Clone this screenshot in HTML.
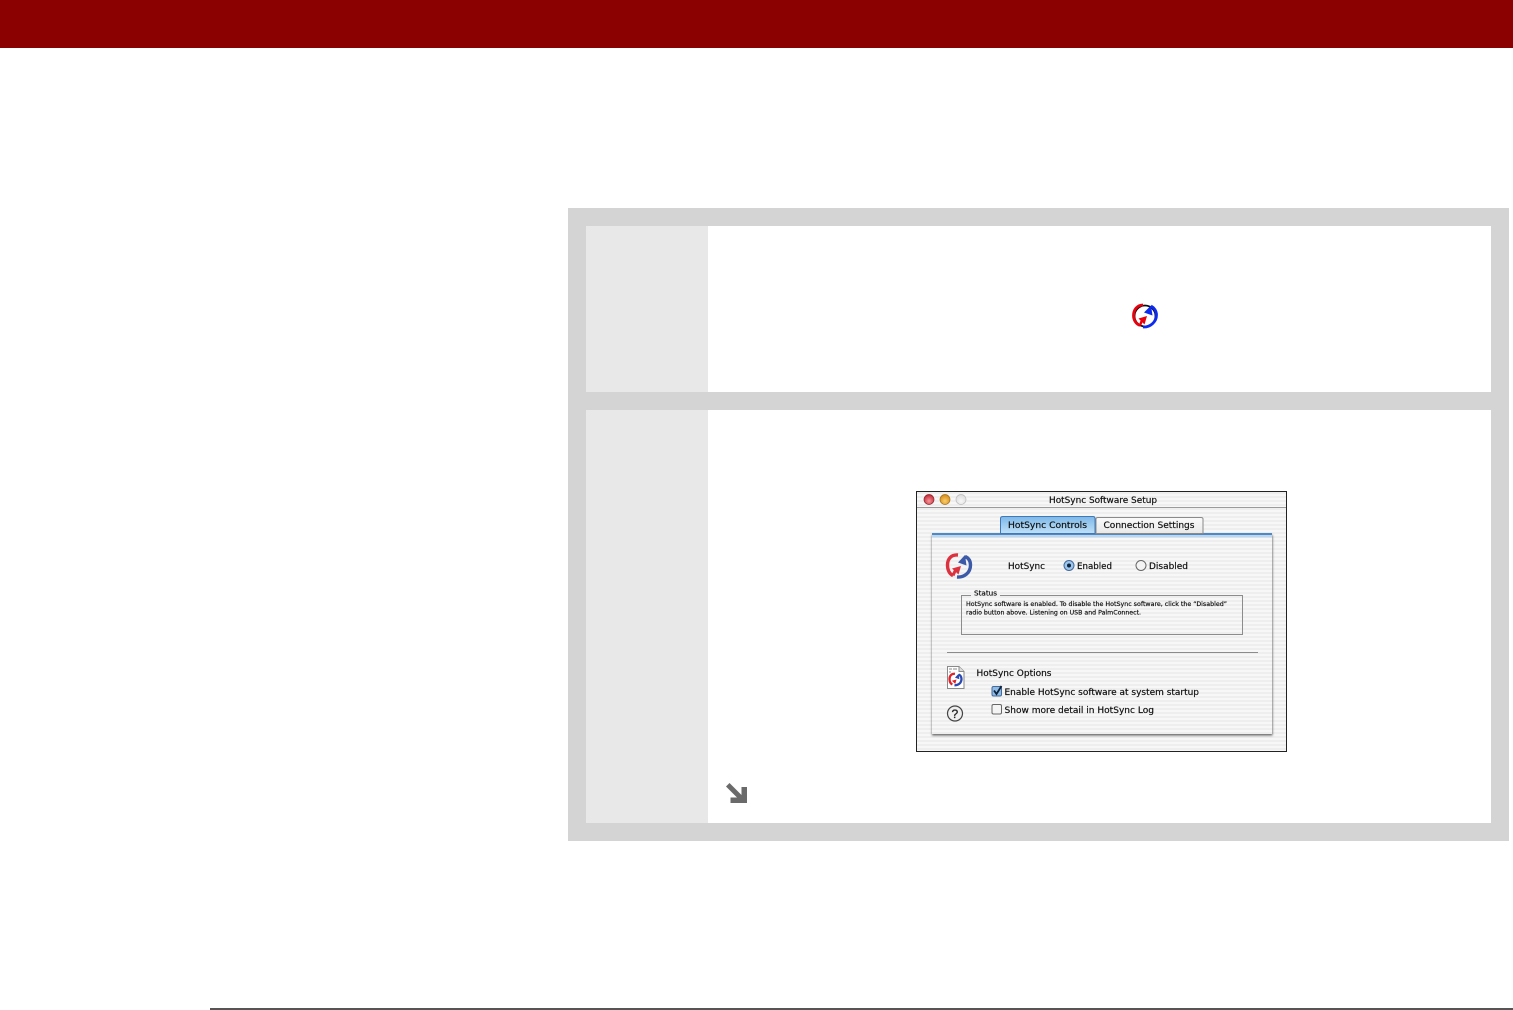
<!DOCTYPE html>
<html>
<head>
<meta charset="utf-8">
<style>
html,body{margin:0;padding:0;width:1513px;height:1010px;overflow:hidden;background:#fff}
.a{position:absolute}
svg text{font-family:"DejaVu Sans","Liberation Sans",sans-serif;fill:#111;stroke:#111;stroke-width:.2}
</style>
</head>
<body>
<div class="a" style="left:0;top:0;width:1513px;height:48px;background:#8b0000"></div>
<div class="a" style="left:568px;top:208px;width:941px;height:633px;background:#d4d4d4"></div>
<div class="a" style="left:586px;top:226px;width:122px;height:166px;background:#e8e8e8"></div>
<div class="a" style="left:708px;top:226px;width:783px;height:166px;background:#fff"></div>
<div class="a" style="left:586px;top:410px;width:122px;height:413px;background:#e8e8e8"></div>
<div class="a" style="left:708px;top:410px;width:783px;height:413px;background:#fff"></div>
<div class="a" style="left:210px;top:1008px;width:1303px;height:2px;background:#555"></div>

<svg class="a" style="left:0;top:0" width="1513" height="1010" viewBox="0 0 1513 1010">
<defs>
<pattern id="st" width="4" height="4" patternUnits="userSpaceOnUse">
<rect width="4" height="4" fill="#f7f7f7"/><rect y="0" width="4" height="2" fill="#eeeeee"/>
</pattern>
<linearGradient id="tab" x1="0" y1="0" x2="0" y2="1"><stop offset="0" stop-color="#7db9e8"/><stop offset="1" stop-color="#c0e0f8"/></linearGradient>
<linearGradient id="tab2" x1="0" y1="0" x2="0" y2="1"><stop offset="0" stop-color="#fafafa"/><stop offset="1" stop-color="#e8e8e8"/></linearGradient>
<radialGradient id="red" cx=".5" cy=".65" r=".6"><stop offset="0" stop-color="#f49a9a"/><stop offset="1" stop-color="#c9283a"/></radialGradient>
<radialGradient id="org" cx=".5" cy=".65" r=".6"><stop offset="0" stop-color="#f8d070"/><stop offset="1" stop-color="#d98a14"/></radialGradient>
<radialGradient id="gry" cx=".5" cy=".65" r=".6"><stop offset="0" stop-color="#f8f8f8"/><stop offset="1" stop-color="#dcdcdc"/></radialGradient>
<filter id="b" x="-5%" y="-5%" width="110%" height="110%"><feGaussianBlur stdDeviation="0.25"/></filter>
<filter id="b2" x="-20%" y="-20%" width="140%" height="140%"><feGaussianBlur stdDeviation="0.25"/></filter>
<filter id="sh" x="-5%" y="-5%" width="110%" height="110%"><feGaussianBlur stdDeviation="1"/></filter>
</defs>

<!-- small sync icon -->
<g fill="none" transform="translate(186,-250)" filter="url(#b2)">
<circle cx="959" cy="566" r="10.500" stroke="#111" stroke-width="1.800"/>
<path d="M957 555C951 555 947.500 560 947.500 565.500C947.500 570 950 574 954 575.500" stroke="#e8000f" stroke-width="2.800"/>
<path d="M957 577C964 577.500 970.500 572 970.500 565C970.500 561 968 557.500 965 556" stroke="#0a2cf0" stroke-width="2.800"/>
<path d="M954 575.500L956 570" stroke="#e8000f" stroke-width="2.400"/>
<path d="M961 566L952.500 568.500L958.500 574.500Z" fill="#e8000f"/>
<path d="M958 562.500L965 555.500L966.500 565.500Z" fill="#0a2cf0"/>
</g>

<!-- arrow -->
<g fill="#6a6a6a" filter="url(#b2)">
<path d="M726 786.500L729.500 783L745.500 799L742 802.500Z"/>
<path d="M741.500 787H747V803H730.500V797.500H741.500Z"/>
</g>

<!-- window -->
<g filter="url(#b)">
<rect x="917" y="492" width="369" height="259" fill="url(#st)"/>
<line x1="917" y1="507.500" x2="1286" y2="507.500" stroke="#9a9a9a"/>
<circle cx="929" cy="499.500" r="5" fill="url(#red)" stroke="#8a2a2a" stroke-width=".7"/>
<circle cx="945" cy="499.500" r="5" fill="url(#org)" stroke="#a07020" stroke-width=".7"/>
<circle cx="961" cy="499.500" r="5" fill="url(#gry)" stroke="#bbb" stroke-width=".7"/>
<text x="1049" y="503" font-size="9" textLength="108" lengthAdjust="spacingAndGlyphs">HotSync Software Setup</text>

<!-- panel -->
<rect x="932" y="535" width="340.500" height="200.500" fill="#666" filter="url(#sh)"/>
<rect x="932" y="534" width="340" height="200" fill="url(#st)"/>
<rect x="932" y="533" width="340" height="2" fill="#5088c4"/>
<rect x="932" y="535" width="340" height="2.500" fill="#bcd6ee"/>

<!-- tabs -->
<path d="M1000.500 533.500V518.500Q1000.500 516.500 1003 516.500H1093Q1095 516.500 1095 518.500V533.500Z" fill="url(#tab)" stroke="#3f78b8"/>
<path d="M1096 533.500V519Q1096 517.500 1098 517.500H1201Q1203 517.500 1203 519V533.500Z" fill="url(#tab2)" stroke="#8a8a8a"/>

<text x="1008" y="528" font-size="9" textLength="79" lengthAdjust="spacingAndGlyphs">HotSync Controls</text>
<text x="1103.500" y="528" font-size="9" textLength="91" lengthAdjust="spacingAndGlyphs">Connection Settings</text>
<text x="1008" y="569" font-size="9" textLength="37" lengthAdjust="spacingAndGlyphs">HotSync</text>
<text x="1077" y="569" font-size="9" textLength="35" lengthAdjust="spacingAndGlyphs">Enabled</text>
<text x="1149" y="569" font-size="9" textLength="39" lengthAdjust="spacingAndGlyphs">Disabled</text>

<!-- panel sync icon -->
<g fill="none">
<path d="M958 555C951 554.500 947.500 559 947.500 565C947.500 570 949.500 574 953 575.500" stroke="#dc3240" stroke-width="3.400"/>
<path d="M953 575.500L955.500 570" stroke="#dc3240" stroke-width="3"/>
<path d="M957 577C964 577.500 970.500 573 970.500 565C970.500 561 968.500 558 965 556.500" stroke="#3d5aa8" stroke-width="3.400"/>
<path d="M961 566L952 568.500L958.500 574.500Z" fill="#dc3240"/>
<path d="M958 562.500L965 555L966.500 565.500Z" fill="#3d5aa8"/>
</g>

<!-- radios -->
<circle cx="1069" cy="565.500" r="5" fill="#9cc6ec" stroke="#44699a"/>
<circle cx="1069" cy="565.500" r="2" fill="#10203a"/>
<circle cx="1141" cy="565.500" r="5" fill="#f4f4f4" stroke="#666"/>

<!-- status box -->
<rect x="961.500" y="595.500" width="281" height="39" fill="none" stroke="#8c8c8c"/>
<rect x="971" y="592" width="29" height="6" fill="#f2f2f2"/>
<text x="974" y="595.500" font-size="7" textLength="23" lengthAdjust="spacingAndGlyphs">Status</text>
<text x="966" y="606" font-size="6.500" textLength="261" lengthAdjust="spacingAndGlyphs">HotSync software is enabled. To disable the HotSync software, click the “Disabled”</text>
<text x="966" y="614.500" font-size="6.500" textLength="175" lengthAdjust="spacingAndGlyphs">radio button above. Listening on USB and PalmConnect.</text>

<line x1="947" y1="652.500" x2="1258" y2="652.500" stroke="#8c8c8c"/>

<!-- doc icon -->
<path d="M947.500 666.500H959L964 671.500V688.500H947.500Z" fill="#fff" stroke="#8a8a8a"/>
<path d="M959 666.500V671.500H964" fill="#ddd" stroke="#8a8a8a"/>
<path d="M949 669h3M949 672h2M953 669h4" stroke="#888"/>
<g fill="none" transform="translate(955.500,679.500) scale(.52) translate(-959,-566)">
<path d="M958 555C951 554.500 947.500 559 947.500 565C947.500 570 949.500 574 953 575.500" stroke="#e0202c" stroke-width="4.400"/>
<path d="M957 577C964 577.500 970.500 573 970.500 565C970.500 561 968.500 558 965 556.500" stroke="#2a4ab0" stroke-width="4.400"/>
<path d="M961 566L952 568.500L958.500 574.500Z" fill="#e0202c"/>
<path d="M958 562.500L965 555L966.500 565.500Z" fill="#2a4ab0"/>
</g>

<text x="976.500" y="676" font-size="9" textLength="75" lengthAdjust="spacingAndGlyphs">HotSync Options</text>
<text x="1004.500" y="695" font-size="9" textLength="194.500" lengthAdjust="spacingAndGlyphs">Enable HotSync software at system startup</text>
<text x="1004.500" y="713" font-size="9" textLength="149.500" lengthAdjust="spacingAndGlyphs">Show more detail in HotSync Log</text>

<!-- checkboxes -->
<rect x="992" y="686.500" width="9.500" height="9.500" rx="1.500" fill="#8fbce6" stroke="#44699a"/>
<path d="M994 690.500L996.500 694L1001.500 686" fill="none" stroke="#10203a" stroke-width="1.800"/>
<rect x="992" y="704.500" width="9.500" height="9.500" rx="1.500" fill="#f4f4f4" stroke="#666"/>

<!-- help -->
<circle cx="955" cy="713.500" r="7.500" fill="#efefef" stroke="#444" stroke-width="1.200"/>
<text x="951.500" y="718" font-size="12" style="font-family:'Liberation Sans',sans-serif;fill:#222;stroke:#222;stroke-width:.3">?</text>
</g>
<!-- crisp window border -->
<rect x="916.500" y="491.500" width="370" height="260" fill="none" stroke="#222"/>
</svg>
</body>
</html>
